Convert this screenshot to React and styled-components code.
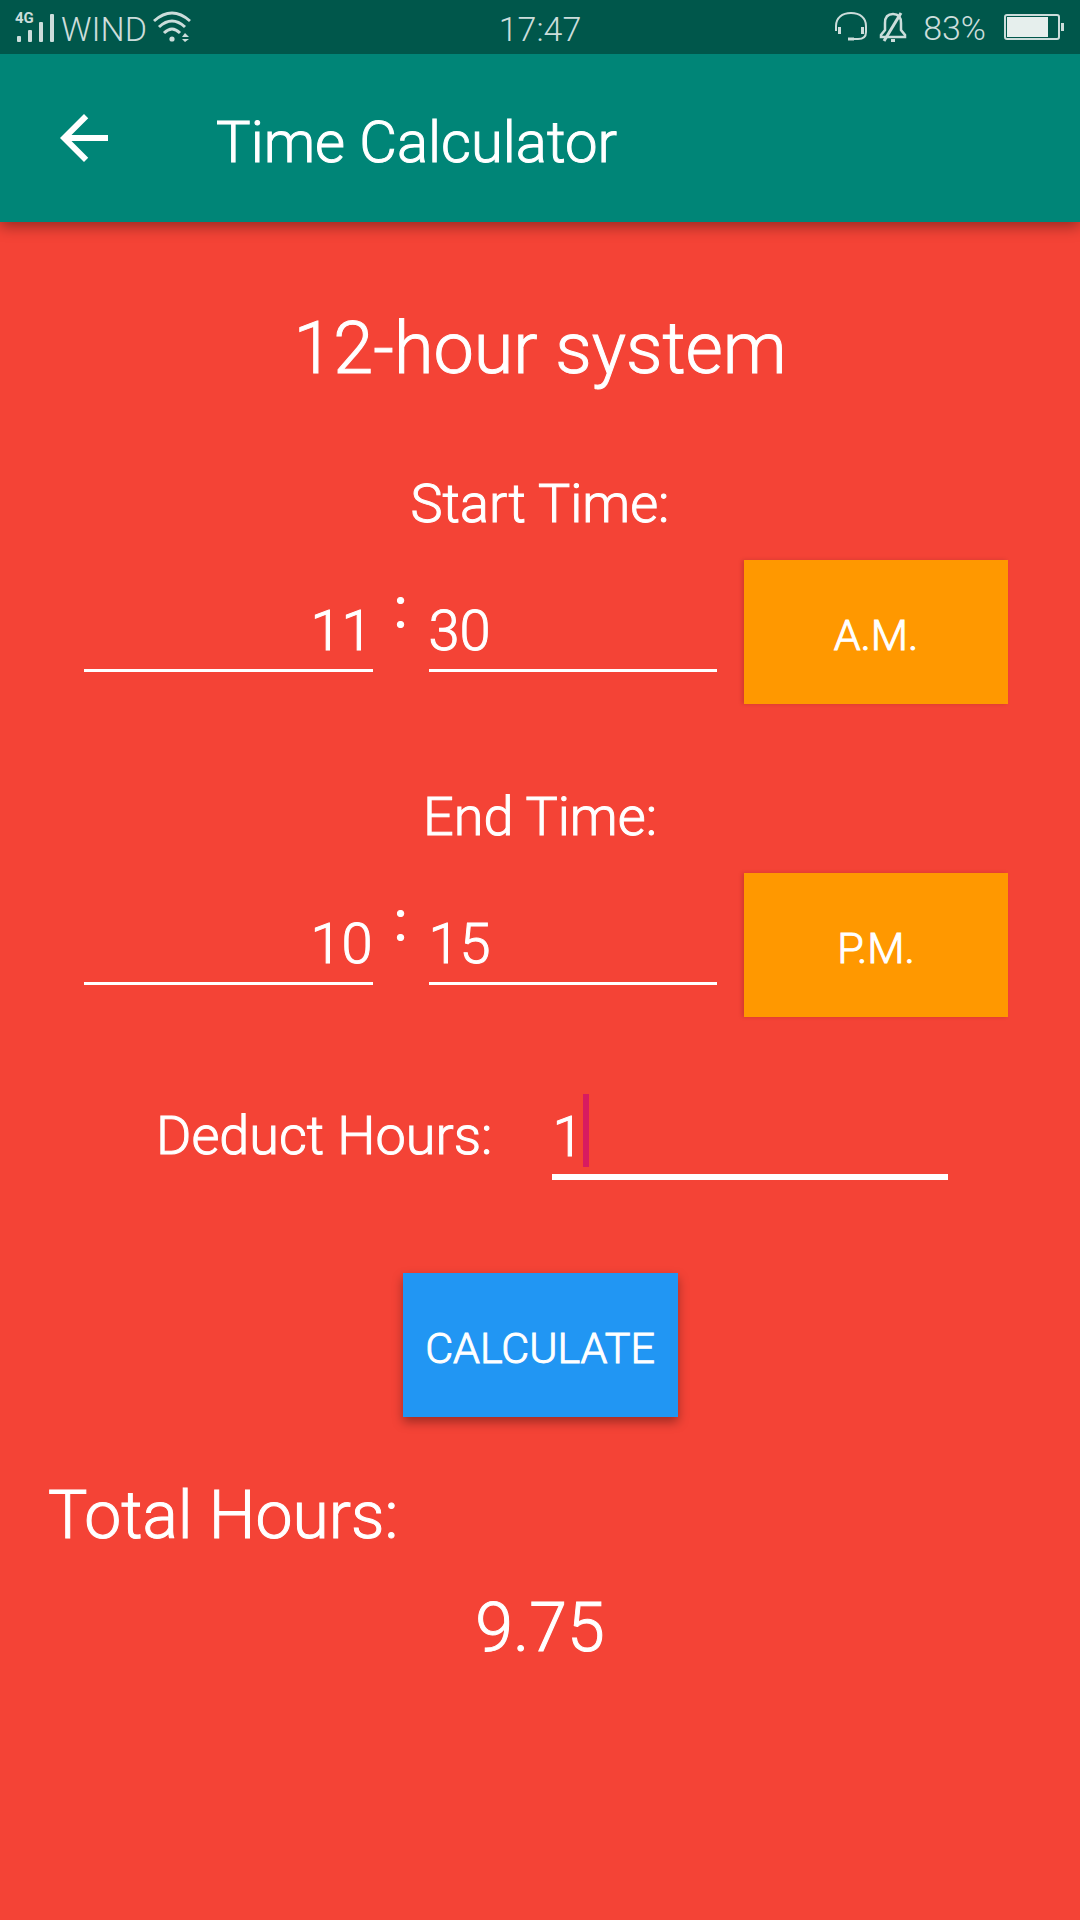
import React, { useState } from 'react';
import styled, { createGlobalStyle } from 'styled-components';

const GlobalStyle = createGlobalStyle`
  *, *::before, *::after {
    box-sizing: border-box;
  }

  body {
    margin: 0;
    background: #f44336;
    color: #ffffff;
    font-family: Roboto, "Liberation Sans", sans-serif;
    font-weight: 300;
    -webkit-text-stroke: 1px currentColor;
  }

  button, input {
    font: inherit;
    color: inherit;
    border: 0;
    border-radius: 0;
    margin: 0;
    padding: 0;
    background: none;
    outline: none;
  }
`;

const Screen = styled.div`
  min-height: 100vh;
  display: flex;
  flex-direction: column;
`;

const StatusBar = styled.div`
  position: relative;
  z-index: 1;
  display: grid;
  grid-template-columns: 1fr auto 1fr;
  align-items: center;
  height: 54px;
  padding: 0 16px;
  background: #00574b;
  color: #ccdddb;
  font-size: 34px;
  line-height: 40px;
  -webkit-text-stroke: 0;
`;

const StatusGroup = styled.div`
  display: flex;
  align-items: center;
  justify-content: ${(p) => (p.$end ? 'flex-end' : 'flex-start')};
  gap: ${(p) => (p.$end ? 12 : 6)}px;
`;

const StatusText = styled.span`
  padding-top: 4px;
`;

const Percent = styled.span`
  padding: 2px 6px 0 4px;
`;

const Signal = styled.span`
  position: relative;
  display: flex;
`;

const Network = styled.span`
  position: absolute;
  left: -1px;
  top: -2px;
  font-size: 15px;
  line-height: 16px;
  font-weight: 700;
`;

const AppBar = styled.header`
  display: flex;
  align-items: center;
  gap: 96px;
  height: 168px;
  padding: 0 48px;
  background: #008577;
  box-shadow: 0 4px 14px rgba(0, 0, 0, 0.4);
`;

const BackButton = styled.button`
  display: flex;
  width: 72px;
  height: 72px;
`;

const AppTitle = styled.h1`
  margin: 0;
  padding-top: 8px;
  font-size: 58px;
  font-weight: inherit;
  line-height: 72px;
`;

const Main = styled.main`
  display: flex;
  flex-direction: column;
  gap: 77px;
  padding: 85px 72px;
`;

const Heading = styled.h2`
  margin: 0;
  font-size: 72px;
  font-weight: inherit;
  line-height: 84px;
  text-align: center;
`;

const TimeGroup = styled.fieldset`
  display: flex;
  flex-direction: column;
  gap: 20px;
  min-width: 0;
  margin: 0;
  padding: 0;
  border: 0;
`;

const FieldLabel = styled.label`
  font-size: 54px;
  line-height: 72px;
  text-align: center;
`;

const TimeRow = styled.div`
  display: flex;
  align-items: flex-end;
  padding-left: 12px;
`;

const TimeInput = styled.input`
  flex: 1;
  min-width: 0;
  margin-bottom: 32px;
  padding-bottom: 2px;
  border-bottom: 3px solid #ffffff;
  font-size: 56px;
  line-height: 72px;
  height: 77px;
  text-align: ${(p) => p.$align};
`;

const Colon = styled.span`
  align-self: flex-start;
  width: 56px;
  padding-top: 12px;
  font-size: 56px;
  font-weight: 400;
  line-height: 72px;
  text-align: center;
`;

const Button = styled.button`
  height: 144px;
  padding: 6px 26px 0;
  font-size: 43px;
  line-height: 48px;
  text-align: center;
  cursor: pointer;
`;

const PeriodButton = styled(Button)`
  width: 264px;
  margin-left: 27px;
  background: #ff9800;
  box-shadow: -2px 0 4px rgba(0, 0, 0, 0.14);
`;

const DeductRow = styled.div`
  display: flex;
  align-items: flex-end;
  gap: 60px;
  padding: 0 60px 0 84px;
`;

const DeductLabel = styled(FieldLabel)`
  padding-bottom: 8px;
`;

const DeductField = styled.div`
  flex: 1;
  display: flex;
  align-items: flex-start;
  border-bottom: 6px solid #ffffff;
`;

const DeductInput = styled.input`
  field-sizing: content;
  max-width: 280px;
  height: 80px;
  padding-top: 6px;
  font-size: 56px;
  line-height: 72px;
  caret-color: transparent;
`;

const Caret = styled.span`
  width: 6px;
  height: 73px;
  background: #d81b60;
`;

const CalculateButton = styled(Button)`
  align-self: center;
  min-width: 275px;
  padding: 6px 20px 0;
  margin-top: 16px;
  background: #2196f3;
  box-shadow: 0 5px 10px rgba(0, 0, 0, 0.35);
`;

const Result = styled.section`
  display: flex;
  flex-direction: column;
  gap: 32px;
  margin: -18px -24px 0;
  line-height: 80px;
`;

const ResultLabel = styled.span`
  font-size: 66px;
`;

const ResultValue = styled.output`
  font-size: 68px;
  text-align: center;
`;

function SignalIcon() {
  return (
    <svg width="39" height="30" viewBox="0 0 39 30" fill="currentColor" aria-hidden="true">
      <rect x="1" y="24" width="4" height="6" rx="1" />
      <rect x="12" y="18" width="4" height="12" rx="1" />
      <rect x="23" y="10" width="4" height="20" rx="1" />
      <rect x="34" y="2" width="4" height="28" rx="1" />
    </svg>
  );
}

function WifiIcon() {
  return (
    <svg width="38" height="32" viewBox="0 0 38 32" fill="none" stroke="currentColor" aria-hidden="true">
      <path d="M1 10 Q19 -6 37 10" strokeWidth="3" />
      <path d="M6 16 Q19 4 32 16" strokeWidth="3" />
      <path d="M11 22 Q19 14 27 22" strokeWidth="3" />
      <circle cx="19" cy="28" r="2.6" fill="currentColor" stroke="none" />
      <path d="M29 26 L32 22 L36 26 Z M29 28 L36 28 L32 31 Z" fill="currentColor" stroke="none" />
    </svg>
  );
}

function HeadsetIcon() {
  return (
    <svg width="32" height="30" viewBox="0 0 32 30" fill="none" stroke="currentColor" strokeWidth="2" aria-hidden="true">
      <path d="M1 19 V14 C1 6 7 1 16 1 C25 1 31 6 31 14 V20 C31 25 28 27 23 27 H14" />
      <path d="M4.500 15 V22 M27.500 15 V22" strokeWidth="3" />
      <path d="M13 27 H19" strokeWidth="3" />
    </svg>
  );
}

function MutedBellIcon() {
  return (
    <svg width="28" height="30" viewBox="0 0 28 30" fill="none" stroke="currentColor" strokeWidth="2.500" aria-hidden="true">
      <path d="M2 25 V23 L6 18 V11 C6 5 9 2 14 2 C19 2 22 5 22 11 V18 L26 23 V25 Z" />
      <path d="M22 1 L5 29" strokeWidth="3" />
      <path d="M12 28.500 H16" strokeWidth="3" />
    </svg>
  );
}

function BatteryIcon() {
  return (
    <svg width="60" height="26" viewBox="0 0 60 26" aria-hidden="true">
      <rect x="1" y="1" width="54" height="24" rx="2" fill="none" stroke="#ccdddb" strokeWidth="2" />
      <rect x="3" y="3" width="41" height="20" fill="#e6efed" />
      <rect x="57" y="9" width="3" height="8" fill="#ccdddb" />
    </svg>
  );
}

function BackIcon() {
  return (
    <svg width="72" height="72" viewBox="0 0 24 24" fill="#ffffff" aria-hidden="true">
      <path d="M20 11H7.830l5.590-5.590L12 4l-8 8 8 8 1.410-1.410L7.830 13H20v-2z" />
    </svg>
  );
}

function TimeField({ id, label, value, onChange }) {
  const set = (patch) => onChange({ ...value, ...patch });
  return (
    <TimeGroup>
      <FieldLabel htmlFor={id}>{label}</FieldLabel>
      <TimeRow>
        <TimeInput
          id={id}
          $align="right"
          inputMode="numeric"
          value={value.hour}
          onChange={(e) => set({ hour: e.target.value })}
        />
        <Colon>:</Colon>
        <TimeInput
          aria-label={`${label} minutes`}
          $align="left"
          inputMode="numeric"
          value={value.minute}
          onChange={(e) => set({ minute: e.target.value })}
        />
        <PeriodButton type="button" onClick={() => set({ pm: !value.pm })}>
          {value.pm ? 'P.M.' : 'A.M.'}
        </PeriodButton>
      </TimeRow>
    </TimeGroup>
  );
}

const toMinutes = ({ hour, minute, pm }) =>
  ((Number(hour) % 12) + (pm ? 12 : 0)) * 60 + Number(minute);

export default function App() {
  const [start, setStart] = useState({ hour: '11', minute: '30', pm: false });
  const [end, setEnd] = useState({ hour: '10', minute: '15', pm: true });
  const [deduct, setDeduct] = useState('1');
  const [total, setTotal] = useState(9.75);

  const calculate = () => {
    const span = (toMinutes(end) - toMinutes(start) + 1440) % 1440;
    setTotal(span / 60 - Number(deduct));
  };

  return (
    <Screen>
      <GlobalStyle />
      <StatusBar>
        <StatusGroup>
          <Signal>
            <SignalIcon />
            <Network>4G</Network>
          </Signal>
          <StatusText>WIND</StatusText>
          <WifiIcon />
        </StatusGroup>
        <StatusText>17:47</StatusText>
        <StatusGroup $end>
          <HeadsetIcon />
          <MutedBellIcon />
          <Percent>83%</Percent>
          <BatteryIcon />
        </StatusGroup>
      </StatusBar>
      <AppBar>
        <BackButton type="button" aria-label="Back">
          <BackIcon />
        </BackButton>
        <AppTitle>Time Calculator</AppTitle>
      </AppBar>
      <Main>
        <Heading>12-hour system</Heading>
        <TimeField id="start" label="Start Time:" value={start} onChange={setStart} />
        <TimeField id="end" label="End Time:" value={end} onChange={setEnd} />
        <DeductRow>
          <DeductLabel htmlFor="deduct">Deduct Hours:</DeductLabel>
          <DeductField>
            <DeductInput
              id="deduct"
              inputMode="decimal"
              value={deduct}
              onChange={(e) => setDeduct(e.target.value)}
            />
            <Caret />
          </DeductField>
        </DeductRow>
        <CalculateButton type="button" onClick={calculate}>
          CALCULATE
        </CalculateButton>
        <Result>
          <ResultLabel>Total Hours:</ResultLabel>
          <ResultValue>{total}</ResultValue>
        </Result>
      </Main>
    </Screen>
  );
}
